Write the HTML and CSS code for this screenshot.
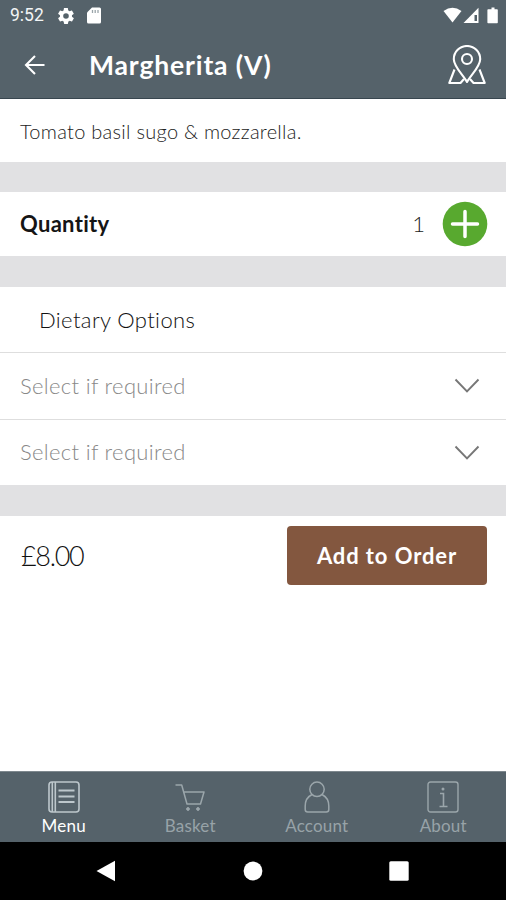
FILE: index.html
```html
<!DOCTYPE html>
<html lang="en">
<head>
<meta charset="utf-8">
<title>Margherita (V)</title>
<link rel="stylesheet" href="styles.css">
</head>
<body>
<div class="screen">
  <div class="status">
    <span class="time">9:52</span>
    <svg class="gear" width="16" height="16" viewBox="2 2 20 20" fill="#fff"><path d="M19.4 13c.1-.3.1-.7.1-1s0-.7-.1-1l2.100-1.600c.2-.2.3-.4.100-.6l-2-3.500c-.1-.2-.4-.3-.6-.2l-2.500 1c-.5-.4-1.100-.7-1.700-1l-.4-2.600c0-.3-.2-.5-.5-.5h-4c-.2 0-.4.2-.5.4l-.4 2.700c-.6.200-1.100.6-1.600 1l-2.500-1c-.3-.1-.5 0-.6.2l-2 3.500c-.1.2-.1.500.1.600L4.500 11c0 .3-.1.700-.1 1s0 .7.1 1l-2.100 1.600c-.2.200-.2.400-.1.600l2 3.500c.1.200.3.300.6.200l2.500-1c.5.400 1.100.700 1.700 1l.4 2.600c0 .300.2.500.5.500h4c.300 0 .500-.2.500-.5l.4-2.600c.600-.3 1.200-.6 1.700-1l2.500 1c.200.100.500 0 .600-.2l2-3.500c.100-.2.100-.5-.1-.6L19.400 13zM12 15.500a3.500 3.500 0 1 1 0-7 3.500 3.500 0 0 1 0 7z"/></svg>
    <svg class="card" width="14" height="17" viewBox="0 0 14 17"><path fill="#fff" d="M5 .5h7.500Q14 .5 14 2v13q0 1.500-1.500 1.500h-11Q0 16.500 0 15V5.500z"/><path stroke="#9aa5aa" stroke-width="1.300" d="M5.500 3v3M8.200 3v3M11 3v3"/></svg>
    <svg class="signals" width="56" height="18" viewBox="0 0 56 18" fill="#fff"><path d="M.5 4Q9.500-2.500 18.500 4L9.500 15.500z"/><path d="M20.500 16 35.500.8V16z"/><path fill="#55626a" d="M31.500 8H34v6h-2.500z"/><path d="M46.500 2.300H48.500V.5h3v1.800h2.500q.8 0 .8.700v12.500q0 .7-.7.700h-9q-.7 0-.7-.7V3q0-.7.700-.7z"/></svg>
  </div>
  <header class="header">
    <svg class="back" width="22" height="22" viewBox="0 0 22 22" fill="none" stroke="#fff" stroke-width="2.100"><path d="M20.500 11H2.500M11 2 2 11l9 9"/></svg>
    <h1 class="title">Margherita (V)</h1>
    <svg class="map" width="38" height="40" viewBox="0 0 38 40" fill="none" stroke="#fff" stroke-width="2.100" stroke-linejoin="round"><path d="M19 37C15 30 5.800 21.500 5.800 14.200a13.200 13.200 0 0 1 26.400 0C32.200 21.500 23 30 19 37z"/><circle cx="19" cy="14" r="5"/><path d="M6.500 24.500 1.300 38h11.200l3.500-4M31.500 24.500 36.700 38H25.500L22 34"/></svg>
  </header>
  <main class="main">
    <section class="row description"><span class="desc-text">Tomato basil sugo &amp; mozzarella.</span></section>
    <div class="gap"></div>
    <section class="row quantity">
      <span class="qty-label">Quantity</span>
      <span class="qty-value">1</span>
      <svg width="46" height="46" viewBox="0 0 46 46"><circle cx="23" cy="23" r="22.300" fill="#58a92f"/><path d="M23 10.500v25M10.500 23h25" stroke="#fff" stroke-width="3.500" stroke-linecap="round"/></svg>
    </section>
    <div class="gap gap-tall"></div>
    <section class="row options-title"><span class="options-text">Dietary Options</span></section>
    <section class="row option"><span class="placeholder">Select if required</span><svg width="26" height="16" viewBox="0 0 26 16" fill="none" stroke="#777" stroke-width="1.900"><path d="m1.500 1.500 11.500 12 11.500-12"/></svg></section>
    <section class="row option"><span class="placeholder">Select if required</span><svg width="26" height="16" viewBox="0 0 26 16" fill="none" stroke="#777" stroke-width="1.900"><path d="m1.500 1.500 11.500 12 11.500-12"/></svg></section>
    <div class="gap gap-tall"></div>
    <section class="order"><span class="price">£8.00</span><button class="add"><span class="add-text">Add to Order</span></button></section>
  </main>
  <nav class="tabs">
    <div class="tab active">
      <svg width="32" height="32" viewBox="0 0 32 32" fill="none" stroke="#bdc7cc" stroke-width="1.600"><rect x="1" y="1" width="30" height="30" rx="3"/><path d="M4.300 1v30M7.300 1v30"/><path stroke-width="2" d="M10.500 9.500h16M10.500 15.500h16M10.500 21h16"/></svg>
      <span class="label">Menu</span>
    </div>
    <div class="tab">
      <svg width="32" height="32" viewBox="0 0 32 32" fill="none" stroke="#9ba6ab" stroke-width="1.500" stroke-linejoin="round"><path d="M1.500 4h6.200l5.300 19h13.500L30 11H9.700"/><circle cx="14" cy="28" r="1.400" fill="#9ba6ab" stroke-width="1"/><circle cx="24" cy="28" r="1.400" fill="#9ba6ab" stroke-width="1"/></svg>
      <span class="label">Basket</span>
    </div>
    <div class="tab">
      <svg width="32" height="32" viewBox="0 0 32 32" fill="none" stroke="#9ba6ab" stroke-width="1.500" stroke-linejoin="round"><circle cx="16" cy="8.300" r="7.200"/><path d="M11 13.500C6 16 4.200 20 4.200 25v3.500Q4.200 31 6.700 31h18.600q2.500 0 2.500-2.500V25c0-5-1.800-9-6.800-11.500"/></svg>
      <span class="label">Account</span>
    </div>
    <div class="tab">
      <svg width="32" height="32" viewBox="0 0 32 32" fill="none" stroke="#9ba6ab" stroke-width="1.400"><rect x="1" y="1" width="30" height="30" rx="2.500"/><path d="M13 12.500h3.500v12.800M12.500 25.500h8" stroke-width="1.600"/><circle cx="16" cy="8" r="1.500" fill="#9ba6ab" stroke="none"/></svg>
      <span class="label">About</span>
    </div>
  </nav>
  <div class="system">
    <svg width="20" height="22" viewBox="0 0 20 22"><path fill="#fff" d="M19 .7v20.600L.5 11z"/></svg>
    <svg width="20" height="20" viewBox="0 0 20 20"><circle cx="10" cy="10" r="9.400" fill="#fff"/></svg>
    <svg width="20" height="20" viewBox="0 0 20 20"><rect x=".3" y=".3" width="19.400" height="19.400" rx="1.500" fill="#fff"/></svg>
  </div>
</div>
</body>
</html>
```

FILE: styles.css
```css
* { box-sizing: border-box; }
body { margin: 0; font-family: Lato, "Open Sans", sans-serif; background: #fff; }
svg { display: block; flex: none; }
span, h1 { white-space: nowrap; }
.screen { width: 506px; height: 900px; display: flex; flex-direction: column; overflow: hidden; }
.status { height: 31px; flex: none; display: flex; align-items: center; padding: 0 7px 0 10px; background: #55626a; }
.time { font: 400 17.5px/31px Roboto, sans-serif; color: #f2f5f6; width: 48px; }
.gear { margin-right: 13px; }
.signals { margin-left: auto; }
.header { height: 68px; flex: none; display: flex; align-items: center; padding: 0 20px 0 24px; background: #55626a; border-bottom: 1px solid #38464f; }
.title { margin: 0 auto 0 43px; font-size: 26.5px; line-height: 32px; font-weight: 700; letter-spacing: .85px; color: #fff; }
.main { flex: 1; display: flex; flex-direction: column; }
.row { height: 64px; flex: none; display: flex; align-items: center; padding: 0 18px 0 20px; }
.description { height: 63px; }
.desc-text { font-size: 20px; font-weight: 300; letter-spacing: .28px; color: #222; }
.gap { height: 30px; flex: none; background: #e1e1e3; }
.gap-tall { height: 31px; }
.qty-label { font-size: 22px; font-weight: 700; letter-spacing: .3px; color: #151515; margin: 0 auto 2px 0; }
.qty-value { font-size: 22px; font-weight: 300; color: #222; margin: 0 17px 2px 0; }
.options-title { height: 65px; padding-left: 39px; }
.options-text { font-size: 22px; font-weight: 300; letter-spacing: .38px; color: #111; }
.option { height: 67px; border-top: 1px solid #dedede; justify-content: space-between; padding-right: 26px; }
.option + .option { height: 66px; }
.placeholder { font-size: 22px; font-weight: 300; letter-spacing: .33px; margin-bottom: 2px; color: #888; }
.order { display: flex; align-items: center; justify-content: space-between; height: 79px; padding: 0 19px 0 21px; }
.price { font-size: 27px; font-weight: 300; letter-spacing: -1.3px; color: #111; }
.add { width: 200px; height: 59px; border: 0; border-radius: 4px; padding: 0; background: #83573f; color: #fff; font-family: inherit; }
.add-text { font-size: 22px; font-weight: 700; letter-spacing: .9px; }
.tabs { height: 71px; flex: none; display: grid; grid-template-columns: repeat(4, 1fr); background: #55626a; border-top: 1px solid #7e888e; }
.tab { display: flex; flex-direction: column; align-items: center; padding: 9px 0 0 1px; color: #98a3a8; }
.active { color: #fff; }
.label { font-size: 17px; line-height: 22px; margin-top: 2px; letter-spacing: .2px; }
.system { height: 58px; flex: none; display: flex; align-items: center; justify-content: space-between; padding: 0 97px 0 96px; background: #000; }
```
